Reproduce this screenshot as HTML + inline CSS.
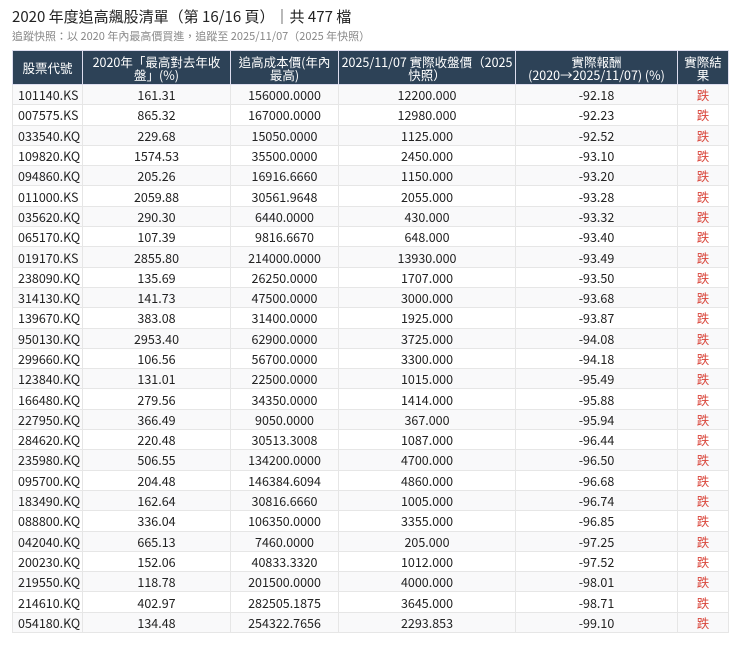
<!DOCTYPE html><html><head><meta charset="utf-8"><style>
body{margin:0;background:#fff;font-family:"Noto Sans CJK TC",sans-serif;color:#222}
.t{position:absolute;left:12px;top:6px;font-size:15px;color:#222;line-height:22px}
.s{position:absolute;left:12px;top:28px;font-size:11px;color:#888;line-height:16px}
table{position:absolute;left:12px;top:50px;border-collapse:collapse;width:716px;font-size:12.5px;table-layout:fixed}
th{background:#2d4257;color:#fff;font-weight:normal;height:33px;line-height:13px;border:1px solid #dde;padding:0;text-align:center;font-size:12.5px;white-space:nowrap}
td{height:19.3px;padding:0;border:1px solid #e6e6e6;text-align:center;line-height:19px}
td:first-child{text-align:left;padding-left:5px}
tr:nth-child(even) td{background:#f9f9fa}
.r{color:#d9453a}
</style></head><body>
<div class="t">2020 年度追高飆股清單（第 16/16 頁）｜共 477 檔</div>
<div class="s">追蹤快照：以 2020 年內最高價買進，追蹤至 2025/11/07（2025 年快照）</div>
<table><colgroup><col style="width:70px"><col style="width:148px"><col style="width:108px"><col style="width:177px"><col style="width:162px"><col style="width:51px"></colgroup>
<tr><th>股票代號</th><th>2020年「最高對去年收<br>盤」(%)</th><th>追高成本價(年內<br>最高)</th><th>2025/11/07 實際收盤價（2025<br>快照）</th><th>實際報酬<br>(2020→2025/11/07) (%)</th><th>實際結<br>果</th></tr>
<tr><td>101140.KS</td><td>161.31</td><td>156000.0000</td><td>12200.000</td><td>-92.18</td><td class="r">跌</td></tr>
<tr><td>007575.KS</td><td>865.32</td><td>167000.0000</td><td>12980.000</td><td>-92.23</td><td class="r">跌</td></tr>
<tr><td>033540.KQ</td><td>229.68</td><td>15050.0000</td><td>1125.000</td><td>-92.52</td><td class="r">跌</td></tr>
<tr><td>109820.KQ</td><td>1574.53</td><td>35500.0000</td><td>2450.000</td><td>-93.10</td><td class="r">跌</td></tr>
<tr><td>094860.KQ</td><td>205.26</td><td>16916.6660</td><td>1150.000</td><td>-93.20</td><td class="r">跌</td></tr>
<tr><td>011000.KS</td><td>2059.88</td><td>30561.9648</td><td>2055.000</td><td>-93.28</td><td class="r">跌</td></tr>
<tr><td>035620.KQ</td><td>290.30</td><td>6440.0000</td><td>430.000</td><td>-93.32</td><td class="r">跌</td></tr>
<tr><td>065170.KQ</td><td>107.39</td><td>9816.6670</td><td>648.000</td><td>-93.40</td><td class="r">跌</td></tr>
<tr><td>019170.KS</td><td>2855.80</td><td>214000.0000</td><td>13930.000</td><td>-93.49</td><td class="r">跌</td></tr>
<tr><td>238090.KQ</td><td>135.69</td><td>26250.0000</td><td>1707.000</td><td>-93.50</td><td class="r">跌</td></tr>
<tr><td>314130.KQ</td><td>141.73</td><td>47500.0000</td><td>3000.000</td><td>-93.68</td><td class="r">跌</td></tr>
<tr><td>139670.KQ</td><td>383.08</td><td>31400.0000</td><td>1925.000</td><td>-93.87</td><td class="r">跌</td></tr>
<tr><td>950130.KQ</td><td>2953.40</td><td>62900.0000</td><td>3725.000</td><td>-94.08</td><td class="r">跌</td></tr>
<tr><td>299660.KQ</td><td>106.56</td><td>56700.0000</td><td>3300.000</td><td>-94.18</td><td class="r">跌</td></tr>
<tr><td>123840.KQ</td><td>131.01</td><td>22500.0000</td><td>1015.000</td><td>-95.49</td><td class="r">跌</td></tr>
<tr><td>166480.KQ</td><td>279.56</td><td>34350.0000</td><td>1414.000</td><td>-95.88</td><td class="r">跌</td></tr>
<tr><td>227950.KQ</td><td>366.49</td><td>9050.0000</td><td>367.000</td><td>-95.94</td><td class="r">跌</td></tr>
<tr><td>284620.KQ</td><td>220.48</td><td>30513.3008</td><td>1087.000</td><td>-96.44</td><td class="r">跌</td></tr>
<tr><td>235980.KQ</td><td>506.55</td><td>134200.0000</td><td>4700.000</td><td>-96.50</td><td class="r">跌</td></tr>
<tr><td>095700.KQ</td><td>204.48</td><td>146384.6094</td><td>4860.000</td><td>-96.68</td><td class="r">跌</td></tr>
<tr><td>183490.KQ</td><td>162.64</td><td>30816.6660</td><td>1005.000</td><td>-96.74</td><td class="r">跌</td></tr>
<tr><td>088800.KQ</td><td>336.04</td><td>106350.0000</td><td>3355.000</td><td>-96.85</td><td class="r">跌</td></tr>
<tr><td>042040.KQ</td><td>665.13</td><td>7460.0000</td><td>205.000</td><td>-97.25</td><td class="r">跌</td></tr>
<tr><td>200230.KQ</td><td>152.06</td><td>40833.3320</td><td>1012.000</td><td>-97.52</td><td class="r">跌</td></tr>
<tr><td>219550.KQ</td><td>118.78</td><td>201500.0000</td><td>4000.000</td><td>-98.01</td><td class="r">跌</td></tr>
<tr><td>214610.KQ</td><td>402.97</td><td>282505.1875</td><td>3645.000</td><td>-98.71</td><td class="r">跌</td></tr>
<tr><td>054180.KQ</td><td>134.48</td><td>254322.7656</td><td>2293.853</td><td>-99.10</td><td class="r">跌</td></tr>
</table></body></html>
